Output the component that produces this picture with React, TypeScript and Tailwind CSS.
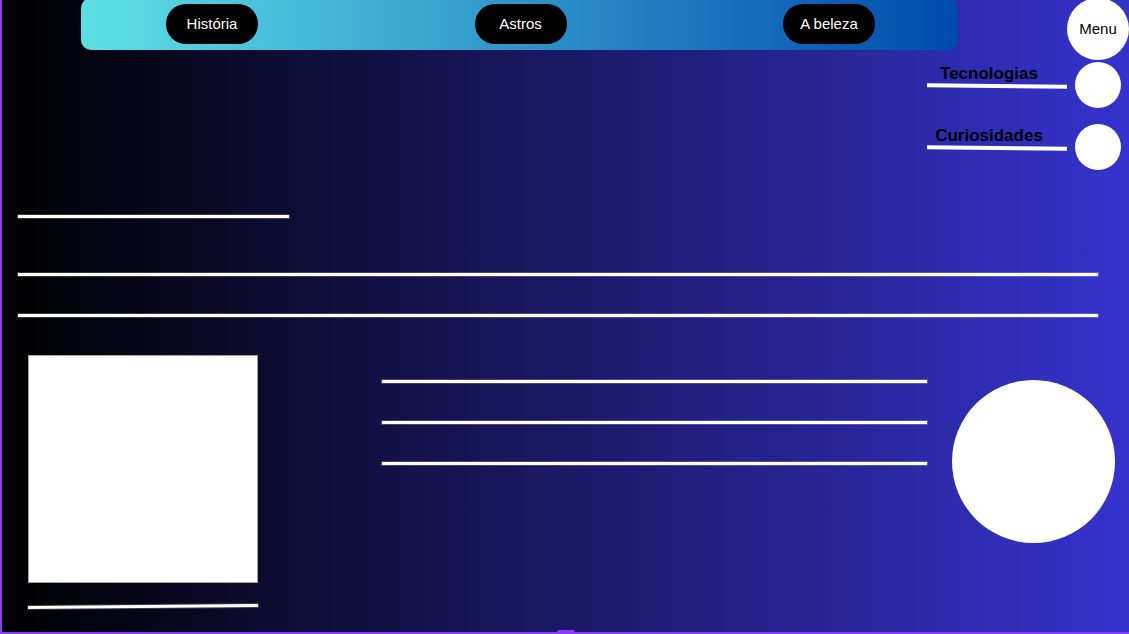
const navItems = ["História", "Astros", "A beleza"];
const menuItems = ["Tecnologias", "Curiosidades"];

function Rule({ className = "" }: { className?: string }) {
  return <div className={`h-[3px] bg-white ring-1 ring-white/20 ${className}`} />;
}

export default function App() {
  return (
    <div className="relative min-h-screen overflow-hidden border-b-2 border-l-2 border-[#8b3dff] bg-linear-to-r/srgb from-black to-[#3533cd] font-['Liberation_Sans',Arial,sans-serif]">
      <header className="-mt-0.5 flex items-start pl-[79px]">
        <nav className="mr-[109px] flex h-[52px] flex-1 items-center justify-between rounded-[10px] bg-linear-to-r/srgb from-[#5de0e6] to-[#004aad] pr-[83px] pl-[85px]">
          {navItems.map((item) => (
            <a
              key={item}
              href="#"
              className="flex h-10 w-[92px] items-center justify-center rounded-full bg-black text-[15px] text-white"
            >
              {item}
            </a>
          ))}
        </nav>
        <button
          type="button"
          className="size-[62px] shrink-0 rounded-full bg-white text-[15px] text-black"
        >
          Menu
        </button>
      </header>

      <ul className="mt-0.5 flex flex-col items-end gap-4 pr-2">
        {menuItems.map((item) => (
          <li key={item}>
            <a href="#" className="flex gap-2 text-black">
              <span className="flex w-[140px] flex-col pt-0.5">
                <span className="pr-4 text-center text-[17px] leading-5 font-bold">
                  {item}
                </span>
                <span className="h-1 rotate-[0.7deg] bg-white" />
              </span>
              <span className="size-[46px] rounded-full bg-white" />
            </a>
          </li>
        ))}
      </ul>

      <main>
        <section className="mt-[45px] pr-[31px] pl-4">
          <Rule className="w-[271px]" />
          <Rule className="mt-[55px]" />
          <Rule className="mt-[38px]" />
        </section>

        <section className="mt-[38px] flex items-start pr-3.5 pb-6 pl-[26px]">
          <div className="w-[230px] shrink-0">
            <div className="h-[228px] border border-neutral-400 bg-white" />
            <div className="mt-[22px] h-[3px] rotate-[-0.5deg] bg-white ring-1 ring-white/20" />
          </div>
          <div className="ml-[124px] flex flex-1 flex-col gap-[38px] pt-[25px]">
            <Rule />
            <Rule />
            <Rule />
          </div>
          <div className="mt-[25px] ml-[25px] size-[163px] shrink-0 rounded-full bg-white" />
        </section>
      </main>

      <div className="absolute bottom-0 left-1/2 h-0.5 w-[18px] -translate-x-1/2 rounded-t-sm bg-[#8b3dff]" />
    </div>
  );
}
